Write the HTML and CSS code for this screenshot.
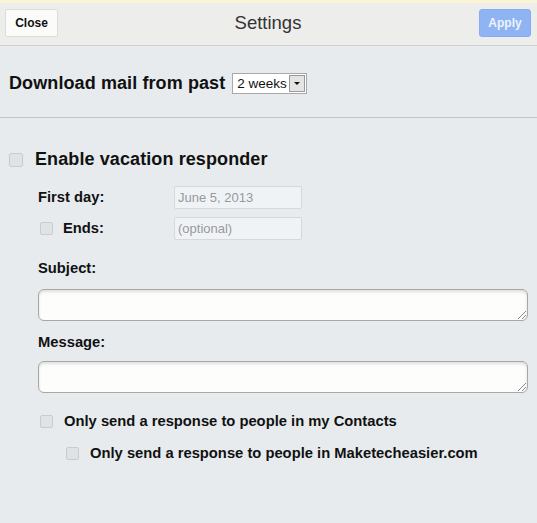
FILE: index.html
```html
<!DOCTYPE html>
<html lang="en">
<head>
  <meta charset="UTF-8" />
  <title>Settings</title>
  <link rel="stylesheet" href="styles.css">
</head>
<body>

  <div class="topbar">
    <button class="btn close">Close</button>
    <h1>Settings</h1>
    <button class="btn apply">Apply</button>
  </div>

  <div class="section download">
    <span class="big-label">Download mail from past</span>
    <div class="fake-select">
      <span>2 weeks</span>
      <span class="arrow"></span>
    </div>
  </div>

  <div class="section vacation">
    <label class="row title-row">
      <span class="check"></span>
      <span class="big-label">Enable vacation responder</span>
    </label>

    <div class="fields">
      <div class="row field-row">
        <span class="label first">First day:</span>
        <span class="text-input">June 5, 2013</span>
      </div>
      <div class="row field-row">
        <span class="check small"></span>
        <span class="label ends">Ends:</span>
        <span class="text-input">(optional)</span>
      </div>

      <div class="label block subject">Subject:</div>
      <div class="area"><span class="grip"></span></div>

      <div class="label block message">Message:</div>
      <div class="area"><span class="grip"></span></div>

      <label class="row option">
        <span class="check small"></span>
        <span class="label">Only send a response to people in my Contacts</span>
      </label>
      <label class="row option sub">
        <span class="check small"></span>
        <span class="label">Only send a response to people in Maketecheasier.com</span>
      </label>
    </div>
  </div>

</body>
</html>
```

FILE: styles.css
```css
* {
  box-sizing: border-box;
}

body {
  font-family: 'Liberation Sans', Arial, sans-serif;
  background: #e7ebee;
  margin: 0;
  color: #111;
  height: 523px;
  overflow: hidden;
}

.topbar {
  border-top: 3px solid #fbf3d5;
  background: #ededeb;
  border-bottom: 1px solid #cfd0cf;
  height: 46px;
  display: flex;
  align-items: center;
  justify-content: space-between;
  padding: 0 6px 2px 5px;
}

.topbar h1 {
  margin: 0;
  font-size: 18.5px;
  font-weight: normal;
  color: #333;
  padding-right: 1px;
}

.btn {
  font-family: inherit;
  font-size: 12px;
  font-weight: bold;
  height: 28px;
  border-radius: 2px;
  padding: 0;
}

.close {
  width: 53px;
  background: #fbfbfa;
  border: 1px solid #dcdcdc;
  color: #111;
}

.apply {
  width: 52px;
  background: #8fb4f4;
  border: 1px solid #88acef;
  color: #eef3fd;
  border-radius: 3px;
}

.big-label {
  font-size: 18px;
  font-weight: bold;
  letter-spacing: 0.1px;
}

.download {
  display: flex;
  align-items: center;
  gap: 7px;
  height: 72px;
  padding: 4px 0 0 9px;
  border-bottom: 1px solid #c3c5c7;
}

.fake-select {
  display: flex;
  align-items: center;
  justify-content: space-between;
  width: 75px;
  height: 21px;
  background: #fff;
  border: 1px solid #a9a9a9;
  font-size: 13.5px;
  color: #111;
  padding: 0 1px 0 4px;
}

.fake-select .arrow {
  width: 16px;
  height: 17px;
  background: #e4e4e2;
  border: 1px solid #9a9a9a;
  position: relative;
}

.fake-select .arrow::after {
  content: "";
  position: absolute;
  left: 4px;
  top: 6px;
  border-left: 3px solid transparent;
  border-right: 3px solid transparent;
  border-top: 3px solid #111;
}

.vacation {
  padding: 31px 0 0 9px;
}

.row {
  display: flex;
  align-items: center;
}

.check {
  width: 14px;
  height: 14px;
  border: 1px solid #c8ccd0;
  background: #dfe3e6;
  border-radius: 2px;
  flex: none;
}

.title-row {
  gap: 12px;
}

.fields {
  padding: 15px 9px 0 29px;
}

.label {
  font-size: 14.75px;
  font-weight: bold;
}

.field-row {
  height: 24px;
  margin-bottom: 7px;
}

.label.first {
  width: 136px;
}

.check.small {
  width: 13px;
  height: 13px;
  margin-left: 2px;
}

.label.ends {
  margin-left: 10px;
  width: 111px;
}

.text-input {
  width: 128px;
  height: 23px;
  background: #f0f3f6;
  border: 1px solid #d6d9dc;
  border-radius: 2px;
  color: #999;
  font-size: 13px;
  font-weight: normal;
  padding: 3px 0 0 3px;
}

.label.subject {
  margin: 20px 0 13px;
}

.label.message {
  margin: 13px 0 11px;
}

.area {
  height: 32px;
  background: #fdfdfb;
  border: 1px solid #a6a7a6;
  border-radius: 6px;
  box-shadow: inset 0 2px 3px rgba(0, 0, 0, 0.12);
  position: relative;
}

.grip {
  position: absolute;
  right: 1px;
  bottom: 1px;
  width: 8px;
  height: 8px;
  background: linear-gradient(135deg, transparent 45%, #888 45%, #888 52%, transparent 52%, transparent 70%, #888 70%, #888 77%, transparent 77%);
}

.option {
  gap: 11px;
  margin-top: 20px;
}

.option.sub {
  margin-top: 16px;
  margin-left: 26px;
}
```
